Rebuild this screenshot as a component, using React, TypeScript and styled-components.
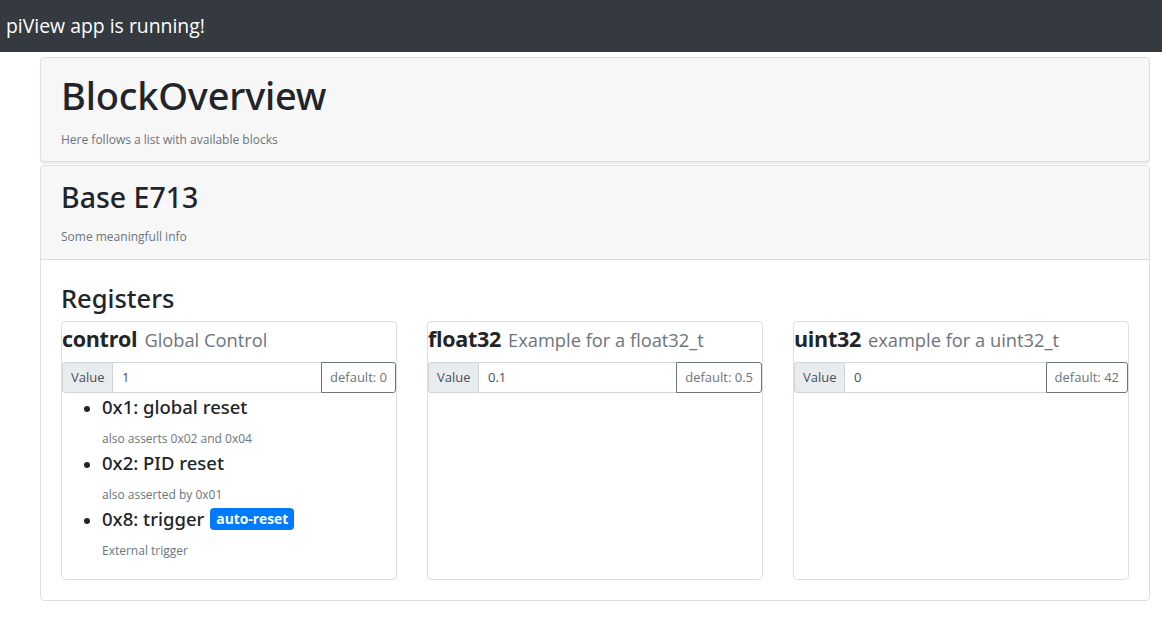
import React from "react";
import styled, { createGlobalStyle } from "styled-components";

const GlobalStyle = createGlobalStyle`
  html, body { margin: 0; padding: 0; background: #fff; }
  body {
    font-family: "Open Sans", "Noto Sans", "Liberation Sans", sans-serif;
    color: #212529;
    font-size: 16px;
    line-height: 1.5;
  }
  * { box-sizing: border-box; }
`;

const headingFont = `"Noto Sans", "Open Sans", "Liberation Sans", sans-serif`;

const Navbar = styled.nav`
  height: 52px;
  background: #343a40;
  display: flex;
  align-items: center;
  padding: 0 6px;
`;

const Brand = styled.span`
  color: #fff;
  font-size: 19.4px;
  line-height: 1;
`;

const Container = styled.main`
  width: 1110px;
  margin: 5px 0 0 40px;
  display: flex;
  flex-direction: column;
  gap: 3px;
`;

const Jumbo = styled.section`
  background: #f7f7f7;
  border: 1px solid #dedede;
  border-radius: 4px;
  box-shadow: 0 2px 1px rgba(0, 0, 0, 0.08);
  padding: 13px 20px 14px;
  height: 105px;
`;

const PageTitle = styled.h1`
  margin: 0;
  font-family: ${headingFont};
  font-size: 38px;
  font-weight: 500;
  line-height: 48px;
  letter-spacing: -0.2px;
`;

const Lead = styled.p`
  margin: 12px 0 0;
  font-size: 12px;
  line-height: 18px;
  color: #6c757d;
`;

const Card = styled.section`
  border: 1px solid #dedede;
  border-radius: 4px;
  overflow: hidden;
`;

const CardHeader = styled.header`
  background: #f7f7f7;
  border-bottom: 1px solid #dedede;
  padding: 12px 20px 12px;
  height: 94px;
`;

const BlockTitle = styled.h2`
  margin: 0;
  font-family: ${headingFont};
  font-size: 28.5px;
  font-weight: 500;
  line-height: 38px;
`;

const CardBody = styled.div`
  padding: 22px 20px 20px;
`;

const SectionTitle = styled.h3`
  margin: 0 0 7px;
  font-family: ${headingFont};
  font-size: 25.5px;
  font-weight: 500;
  line-height: 32px;
`;

const Grid = styled.div`
  display: grid;
  grid-template-columns: repeat(3, 1fr);
  gap: 30px;
`;

const RegCard = styled.article`
  border: 1px solid #dfdfdf;
  border-radius: 4px;
  display: flex;
  flex-direction: column;
  min-height: 258px;
`;

const RegTitle = styled.h4`
  margin: 0;
  height: 40px;
  display: flex;
  align-items: baseline;
  gap: 7px;
  padding-top: 1px;
  line-height: 32px;
`;

const RegName = styled.span`
  font-size: 21.5px;
  font-weight: 700;
  letter-spacing: -0.3px;
`;

const RegDesc = styled.span`
  font-size: 18.3px;
  font-weight: 400;
  color: #6c757d;
`;

const InputGroup = styled.div`
  display: flex;
  height: 31px;
  font-size: 13px;
`;

const Prepend = styled.span`
  display: flex;
  align-items: center;
  padding: 0 8px;
  background: #e9ecef;
  border: 1px solid #ced4da;
  border-radius: 3px 0 0 3px;
  color: #495057;
  width: 51px;
`;

const ValueInput = styled.input`
  flex: 1;
  min-width: 0;
  border: 1px solid #ced4da;
  border-left: 0;
  border-right: 0;
  padding: 0 9px;
  font: inherit;
  color: #495057;
  outline: none;
`;

const DefaultButton = styled.button`
  border: 1px solid #6c757d;
  border-radius: 0 3px 3px 0;
  background: #fff;
  color: #6c757d;
  font: inherit;
  padding: 0 8px;
`;

const BitList = styled.ul`
  margin: 2px 0 16px;
  padding-left: 40px;
`;

const BitItem = styled.li`
  &::marker { font-size: 16px; }
`;

const BitTitle = styled.h5`
  margin: 0 0 8px;
  font-family: ${headingFont};
  font-size: 18.5px;
  font-weight: 500;
  line-height: 24px;
  display: flex;
  align-items: center;
  gap: 6px;
`;

const Badge = styled.span`
  background: #007bff;
  color: #fff;
  font-family: "Open Sans", sans-serif;
  font-size: 13.8px;
  font-weight: 700;
  line-height: 22px;
  padding: 0 6px;
  border-radius: 4px;
`;

const BitNote = styled.p`
  margin: 0;
  line-height: 24px;
  font-size: 12px;
  color: #6c757d;
`;

type Bit = { title: string; note: string; badge?: string };
type Register = { name: string; desc: string; value: string; def: string; bits: Bit[] };

const registers: Register[] = [
  {
    name: "control",
    desc: "Global Control",
    value: "1",
    def: "0",
    bits: [
      { title: "0x1: global reset", note: "also asserts 0x02 and 0x04" },
      { title: "0x2: PID reset", note: "also asserted by 0x01" },
      { title: "0x8: trigger", note: "External trigger", badge: "auto-reset" },
    ],
  },
  { name: "float32", desc: "Example for a float32_t", value: "0.1", def: "0.5", bits: [] },
  { name: "uint32", desc: "example for a uint32_t", value: "0", def: "42", bits: [] },
];

export default function App() {
  return (
    <>
      <GlobalStyle />
      <Navbar>
        <Brand>piView app is running!</Brand>
      </Navbar>
      <Container>
        <Jumbo>
          <PageTitle>BlockOverview</PageTitle>
          <Lead>Here follows a list with available blocks</Lead>
        </Jumbo>
        <Card>
          <CardHeader>
            <BlockTitle>Base E713</BlockTitle>
            <Lead>Some meaningfull info</Lead>
          </CardHeader>
          <CardBody>
            <SectionTitle>Registers</SectionTitle>
            <Grid>
              {registers.map((r) => (
                <RegCard key={r.name}>
                  <RegTitle>
                    <RegName>{r.name}</RegName>
                    <RegDesc>{r.desc}</RegDesc>
                  </RegTitle>
                  <InputGroup>
                    <Prepend>Value</Prepend>
                    <ValueInput defaultValue={r.value} />
                    <DefaultButton>default: {r.def}</DefaultButton>
                  </InputGroup>
                  {r.bits.length > 0 && (
                    <BitList>
                      {r.bits.map((b) => (
                        <BitItem key={b.title}>
                          <BitTitle>
                            {b.title}
                            {b.badge && <Badge>{b.badge}</Badge>}
                          </BitTitle>
                          <BitNote>{b.note}</BitNote>
                        </BitItem>
                      ))}
                    </BitList>
                  )}
                </RegCard>
              ))}
            </Grid>
          </CardBody>
        </Card>
      </Container>
    </>
  );
}
